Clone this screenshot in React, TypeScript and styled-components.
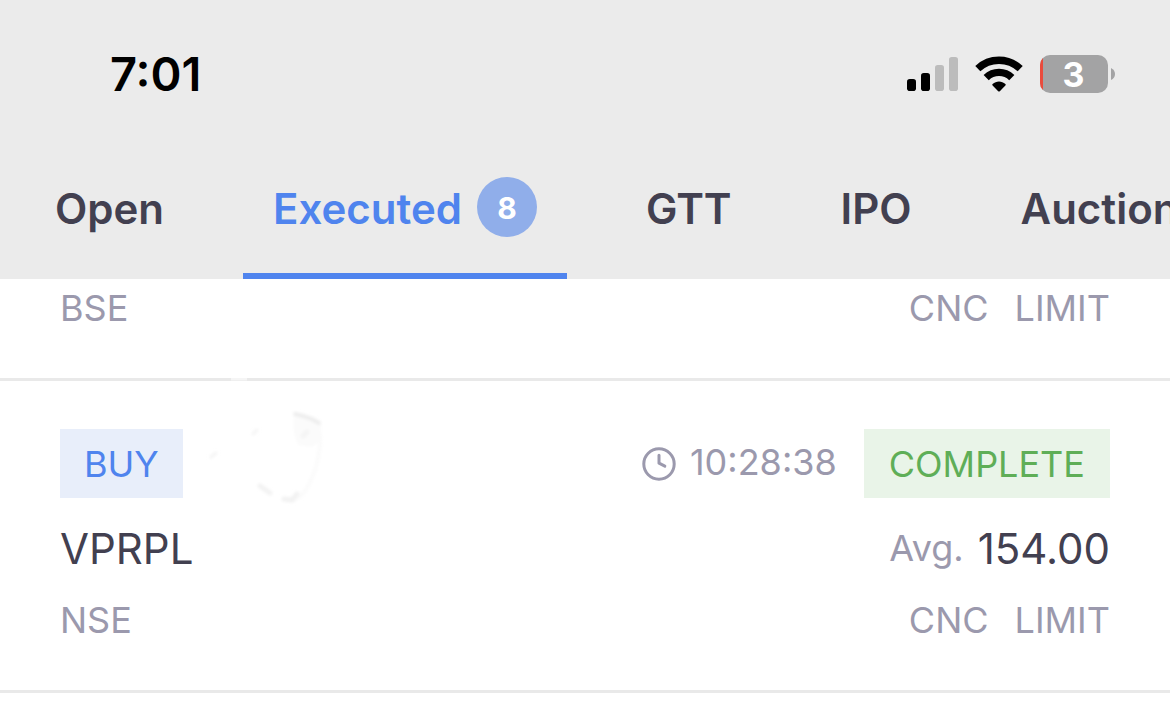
import React from "react";
import styled, { createGlobalStyle } from "styled-components";

const GlobalStyle = createGlobalStyle`
  *, *::before, *::after { box-sizing: border-box; }
  body {
    margin: 0;
    background: #ffffff;
    color: #424050;
    font-family: Inter, "Liberation Sans", sans-serif;
    overflow: hidden;
  }
  button { font: inherit; color: inherit; }
`;

const Header = styled.header`
  background: #ebebeb;
`;

const StatusBar = styled.div`
  display: flex;
  align-items: center;
  justify-content: space-between;
  height: 148px;
  padding: 0 55px 0 110px;
`;

const Clock = styled.time`
  color: #000000;
  font-size: 47px;
  font-weight: 600;
  line-height: 56px;
`;

const StatusIcons = styled.div`
  display: flex;
  align-items: center;
  gap: 17px;

  svg { display: block; }
`;

const Battery = styled.div`
  position: relative;
  display: flex;
  width: 75px;
  height: 38px;
`;

const BatteryLevel = styled.span`
  position: absolute;
  inset: 0 8px 0 0;
  color: #ffffff;
  font-size: 34px;
  font-weight: 700;
  line-height: 40px;
  text-align: center;
`;

const Tabs = styled.nav`
  display: flex;
  gap: 49px;
  padding-left: 25px;
  overflow: hidden;
`;

const Tab = styled.button<{ $active?: boolean }>`
  display: flex;
  flex: none;
  align-items: flex-start;
  gap: 15px;
  padding: 29px 30px 32px;
  border: 0;
  border-bottom: 6px solid ${(p) => (p.$active ? "#4f84ee" : "transparent")};
  background: none;
  color: ${(p) => (p.$active ? "#4f84ee" : "#424050")};
  font-size: 42px;
  font-weight: 600;
  line-height: 64px;
  white-space: nowrap;
`;

const Count = styled.span`
  width: 60px;
  height: 60px;
  border-radius: 50%;
  background: #90aeea;
  color: #ffffff;
  font-size: 30px;
  font-weight: 700;
  line-height: 62px;
  text-align: center;
`;

const Orders = styled.main`
  position: relative;
`;

const Order = styled.article<{ $clipped?: boolean }>`
  display: flex;
  flex-direction: column;
  gap: 24px;
  padding: ${(p) => (p.$clipped ? "7px" : "48px")} 60px 48px;
  border-bottom: 3px solid #e9e9e9;
`;

const Row = styled.div`
  display: flex;
  align-items: center;
  justify-content: space-between;
`;

const Group = styled.div<{ $gap: number }>`
  display: flex;
  align-items: center;
  gap: ${(p) => p.$gap}px;
`;

const Tag = styled.span<{ $tone: "buy" | "done" }>`
  padding: 1px ${(p) => (p.$tone === "buy" ? "24px" : "25px")} 0;
  background: ${(p) => (p.$tone === "buy" ? "#e8eefa" : "#e9f4e8")};
  color: ${(p) => (p.$tone === "buy" ? "#4f84ee" : "#5fae57")};
  font-size: 36px;
  line-height: 68px;
`;

const Muted = styled.span`
  color: #9b99ad;
  font-size: 36px;
  line-height: 44px;
`;

const PlacedAt = styled.time`
  display: flex;
  align-items: flex-start;
  gap: 14px;
  color: #9b99ad;
  font-size: 36px;
  line-height: 30px;
`;

const Strong = styled.span`
  padding-top: 2px;
  color: #424050;
  font-size: 42px;
  line-height: 50px;
`;

const Smudge = styled.svg`
  position: absolute;
  top: 93px;
  left: 200px;
  pointer-events: none;
`;

const SignalIcon = () => (
  <svg width="51" height="34" viewBox="0 0 51 34" aria-hidden="true">
    <rect x="0" y="22" width="9" height="12" rx="2.8" fill="#000" />
    <rect x="14" y="16" width="9" height="18" rx="2.8" fill="#000" />
    <rect x="28" y="8" width="9" height="26" rx="2.8" fill="#bcbcbc" />
    <rect x="42" y="0" width="9" height="34" rx="2.8" fill="#bcbcbc" />
  </svg>
);

const WifiIcon = () => (
  <svg width="48" height="36" viewBox="0 0 48 36" aria-hidden="true">
    <g fill="none" stroke="#000" strokeWidth="7.4">
      <path d="M2.8 12.6A31 31 0 0 1 45.2 12.6" />
      <path d="M11.2 21.6A18.4 18.4 0 0 1 36.8 21.6" />
    </g>
    <path d="M17.6 28C21.2 24.6 26.8 24.6 30.4 28Q31.2 28.8 30.4 29.6L24.8 35.2Q24 35.9 23.2 35.2L17.6 29.6Q16.8 28.8 17.6 28Z" />
  </svg>
);

const BatteryIcon = () => (
  <svg width="75" height="38" viewBox="0 0 75 38" aria-hidden="true">
    <defs>
      <clipPath id="battery-body">
        <rect width="68" height="38" rx="10" />
      </clipPath>
    </defs>
    <g clipPath="url(#battery-body)">
      <rect width="68" height="38" fill="#a3a3a4" />
      <rect width="3" height="38" fill="#ea4b3c" />
    </g>
    <path d="M71 13Q75 15 75 19T71 25Z" fill="#a3a3a4" />
  </svg>
);

const TimeIcon = () => (
  <svg width="34" height="34" viewBox="0 0 34 34" aria-hidden="true">
    <g fill="none" stroke="#9b99ad" strokeWidth="3" strokeLinecap="round" strokeLinejoin="round">
      <circle cx="17" cy="17" r="15.2" />
      <path d="M17 8.2V16.2L22.8 19.2" />
    </g>
  </svg>
);

const SmudgeMark = () => (
  <Smudge width="130" height="140" viewBox="0 0 130 140" aria-hidden="true">
    <defs>
      <filter id="soft" x="-30%" y="-30%" width="160%" height="160%">
        <feGaussianBlur stdDeviation="1.8" />
      </filter>
    </defs>
    <path d="M31 7H47" stroke="#fff" strokeWidth="3" opacity="0.55" />
    <g filter="url(#soft)" fill="none" strokeLinecap="round">
      <path d="M94 44Q92 60 98 73L112 75L121 68V52Z" fill="#fbfbfb" />
      <path d="M95 42L103 44L112 47L119 51" stroke="#ededed" strokeWidth="4" />
      <path d="M103 64L107 60" stroke="#f4f4f4" strokeWidth="5" />
      <path d="M120 62Q121 85 112 106T92 128" stroke="#fbfbfb" strokeWidth="4" />
      <path d="M60 114L70 121" stroke="#f3f3f3" strokeWidth="5" />
      <path d="M84 127L92 128L97 122" stroke="#f2f2f2" strokeWidth="5" />
      <path d="M53 62L57 58M11 85L16 81" stroke="#f4f4f4" strokeWidth="3" />
    </g>
  </Smudge>
);

const tabs = [
  { label: "Open" },
  { label: "Executed", count: 8 },
  { label: "GTT" },
  { label: "IPO" },
  { label: "Auctions" },
];

const OrderMeta = ({ exchange }: { exchange: string }) => (
  <Row>
    <Muted>{exchange}</Muted>
    <Group $gap={26}>
      <Muted>CNC</Muted>
      <Muted>LIMIT</Muted>
    </Group>
  </Row>
);

export default function App() {
  return (
    <>
      <GlobalStyle />
      <Header>
        <StatusBar>
          <Clock>7:01</Clock>
          <StatusIcons>
            <SignalIcon />
            <WifiIcon />
            <Battery>
              <BatteryIcon />
              <BatteryLevel>3</BatteryLevel>
            </Battery>
          </StatusIcons>
        </StatusBar>
        <Tabs>
          {tabs.map((tab) => (
            <Tab key={tab.label} type="button" $active={tab.label === "Executed"}>
              {tab.label}
              {tab.count && <Count>{tab.count}</Count>}
            </Tab>
          ))}
        </Tabs>
      </Header>
      <Orders>
        <Order $clipped>
          <OrderMeta exchange="BSE" />
        </Order>
        <Order>
          <Row>
            <Tag $tone="buy">BUY</Tag>
            <Group $gap={27}>
              <PlacedAt>
                <TimeIcon />
                10:28:38
              </PlacedAt>
              <Tag $tone="done">COMPLETE</Tag>
            </Group>
          </Row>
          <Row>
            <Strong>VPRPL</Strong>
            <Group $gap={14}>
              <Muted>Avg.</Muted>
              <Strong>154.00</Strong>
            </Group>
          </Row>
          <OrderMeta exchange="NSE" />
        </Order>
        <SmudgeMark />
      </Orders>
    </>
  );
}
